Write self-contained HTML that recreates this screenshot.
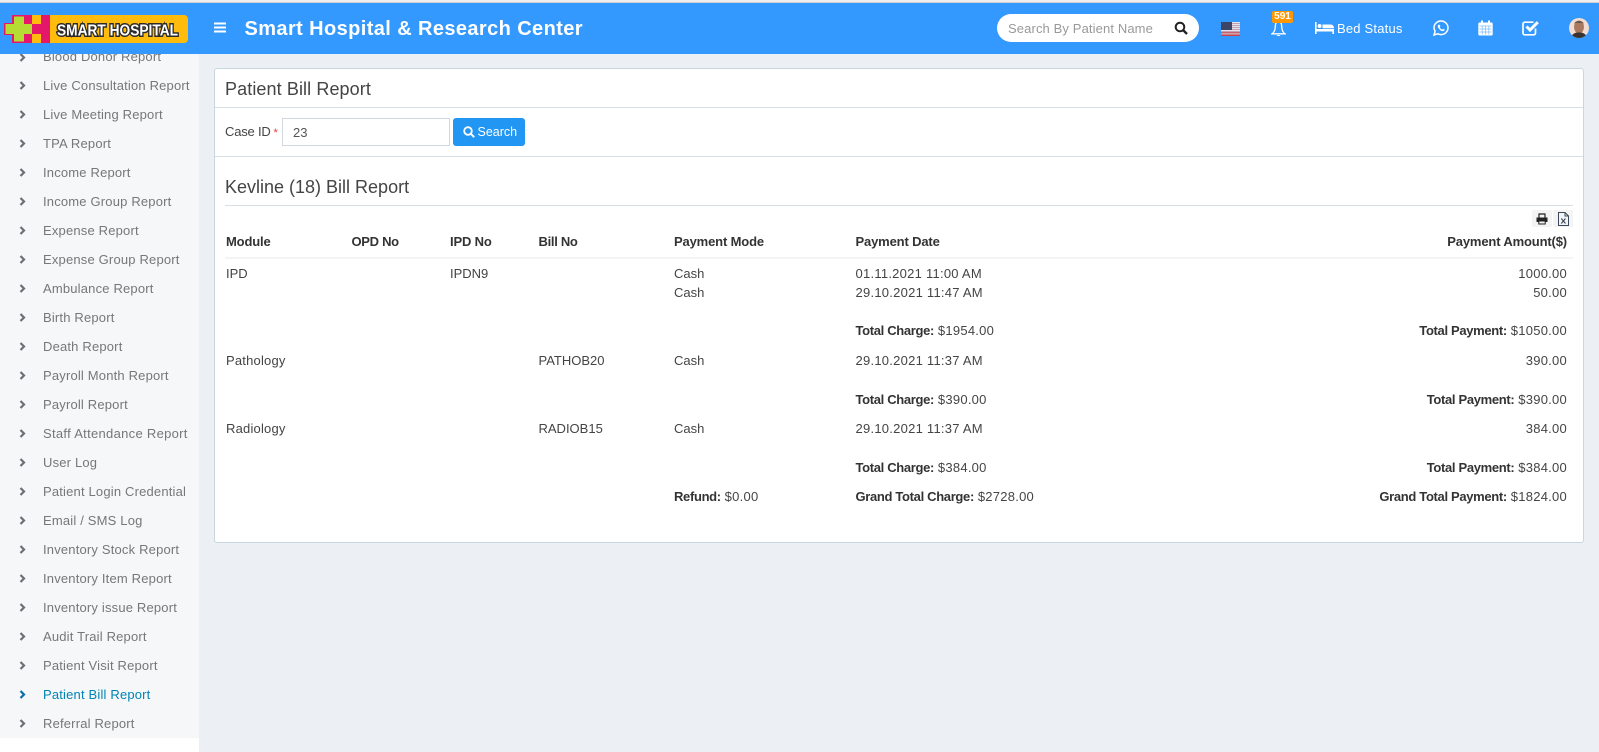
<!DOCTYPE html>
<html><head><meta charset="utf-8"><title>Patient Bill Report</title>
<style>
html,body{margin:0;padding:0;width:1599px;height:752px;overflow:hidden;background:#fff;font-family:"Liberation Sans",sans-serif;font-size:13px;color:#444}
div,span,svg{box-sizing:border-box}
.a{position:absolute}
.t{position:absolute;white-space:nowrap;line-height:16px;height:16px}
.r{text-align:right;right:32px}
.v{letter-spacing:.25px}
b{color:#333;font-weight:bold;letter-spacing:-.33px}
.s{left:43px;color:#777;letter-spacing:.18px}
.c{position:absolute;left:19px;width:7px;height:9px}
.h{font-weight:bold;color:#333;letter-spacing:-.15px}
</style></head><body>
<div class="a" style="left:199px;top:0;width:1400px;height:752px;background:#ecf0f5"></div>
<div class="a" style="left:0;top:0;width:199px;height:738px;background:#f6f7f9"></div>

<svg width="0" height="0" style="position:absolute"><defs><symbol id="ch" viewBox="0 0 7 9"><path d="M1.5 1L5 4.5L1.5 8" fill="none" stroke="currentColor" stroke-width="2.2"/></symbol></defs></svg>
<div style="color:#6e6e74">
<svg class="c" style="top:52.5px"><use href="#ch"/></svg><div class="t s" style="top:49px">Blood Donor Report</div>
<svg class="c" style="top:81px"><use href="#ch"/></svg><div class="t s" style="top:77.5px">Live Consultation Report</div>
<svg class="c" style="top:110px"><use href="#ch"/></svg><div class="t s" style="top:106.5px">Live Meeting Report</div>
<svg class="c" style="top:139px"><use href="#ch"/></svg><div class="t s" style="top:135.5px">TPA Report</div>
<svg class="c" style="top:168px"><use href="#ch"/></svg><div class="t s" style="top:164.5px">Income Report</div>
<svg class="c" style="top:197px"><use href="#ch"/></svg><div class="t s" style="top:193.5px">Income Group Report</div>
<svg class="c" style="top:226px"><use href="#ch"/></svg><div class="t s" style="top:222.5px">Expense Report</div>
<svg class="c" style="top:255px"><use href="#ch"/></svg><div class="t s" style="top:251.5px">Expense Group Report</div>
<svg class="c" style="top:284px"><use href="#ch"/></svg><div class="t s" style="top:280.5px">Ambulance Report</div>
<svg class="c" style="top:313px"><use href="#ch"/></svg><div class="t s" style="top:309.5px">Birth Report</div>
<svg class="c" style="top:342px"><use href="#ch"/></svg><div class="t s" style="top:338.5px">Death Report</div>
<svg class="c" style="top:371px"><use href="#ch"/></svg><div class="t s" style="top:367.5px">Payroll Month Report</div>
<svg class="c" style="top:400px"><use href="#ch"/></svg><div class="t s" style="top:396.5px">Payroll Report</div>
<svg class="c" style="top:429px"><use href="#ch"/></svg><div class="t s" style="top:425.5px;letter-spacing:.3px">Staff Attendance Report</div>
<svg class="c" style="top:458px"><use href="#ch"/></svg><div class="t s" style="top:454.5px">User Log</div>
<svg class="c" style="top:487px"><use href="#ch"/></svg><div class="t s" style="top:483.5px">Patient Login Credential</div>
<svg class="c" style="top:516px"><use href="#ch"/></svg><div class="t s" style="top:512.5px">Email / SMS Log</div>
<svg class="c" style="top:545px"><use href="#ch"/></svg><div class="t s" style="top:541.5px">Inventory Stock Report</div>
<svg class="c" style="top:574px"><use href="#ch"/></svg><div class="t s" style="top:570.5px">Inventory Item Report</div>
<svg class="c" style="top:603px"><use href="#ch"/></svg><div class="t s" style="top:599.5px">Inventory issue Report</div>
<svg class="c" style="top:632px"><use href="#ch"/></svg><div class="t s" style="top:628.5px">Audit Trail Report</div>
<svg class="c" style="top:661px"><use href="#ch"/></svg><div class="t s" style="top:657.5px">Patient Visit Report</div>
<svg class="c" style="top:690px;color:#0a6fa8"><use href="#ch"/></svg><div class="t s" style="top:686.5px;color:#0084b4">Patient Bill Report</div>
<svg class="c" style="top:719px"><use href="#ch"/></svg><div class="t s" style="top:715.5px">Referral Report</div>
</div>

<!-- header -->
<div class="a" style="left:0;top:0;width:1599px;height:3px;background:#eee;border-bottom:1px solid #d0d0d0"></div>
<div class="a" style="left:0;top:3px;width:1599px;height:51px;background:#3399ff"></div>

<!-- logo -->
<svg class="a" style="left:0;top:0" width="200" height="54">
<path d="M50 15H184a4 4 0 0 1 4 4V39a4 4 0 0 1-4 4H50Z" fill="#ffbc0d"/>
<path d="M12 15H50V43H12V35H4V23H12Z" fill="#e5176b"/>
<path d="M14 16.5H24V24H32V34H24V41.5H14V34H5.5V24H14Z" fill="#b5dc32"/>
<rect x="32" y="15" width="9" height="9" fill="#ffbc0d"/><rect x="32" y="34" width="9" height="9" fill="#ffbc0d"/>
<text x="57" y="35.5" font-family="Liberation Sans" font-weight="bold" font-size="16" fill="#fff" stroke="#2a2a2a" stroke-width="3" paint-order="stroke" textLength="121" lengthAdjust="spacingAndGlyphs">SMART HOSPITAL</text>
</svg>

<!-- hamburger -->
<svg class="a" style="left:214px;top:22px" width="12" height="11"><path d="M0 1.5H12M0 5.5H12M0 9.5H12" stroke="#fff" stroke-width="2"/></svg>
<div class="t" style="left:244.5px;top:16.5px;height:24px;line-height:24px;font-size:20px;font-weight:bold;color:#fff;letter-spacing:.4px">Smart Hospital &amp; Research Center</div>

<!-- search -->
<div class="a" style="left:997px;top:14px;width:202px;height:28px;background:#fff;border-radius:14px"></div>
<div class="t" style="left:1008px;top:21px;color:#999;letter-spacing:.12px">Search By Patient Name</div>
<svg class="a" style="left:1174px;top:21px" width="14" height="14" viewBox="0 0 14 14"><circle cx="6" cy="6" r="4.3" fill="none" stroke="#222" stroke-width="2"/><path d="M9 9L13 13" stroke="#222" stroke-width="2.4"/></svg>

<!-- flag -->
<svg class="a" style="left:1221px;top:22px" width="19" height="14" viewBox="0 0 19 14">
<rect width="19" height="14" fill="#e4e4ee"/>
<path d="M0 1.5H19M0 3.5H19M0 5.5H19M0 7.5H19M0 9.5H19M0 11.5H19" stroke="#c4a0b0" stroke-width="1"/>
<path d="M0 13.2H19" stroke="#c9404a" stroke-width="1.6"/>
<path d="M0 10.5H19" stroke="#c9606a" stroke-width="1"/>
<rect width="11" height="8" fill="#3c4468"/>
</svg>

<!-- bell -->
<svg class="a" style="left:1271px;top:20px" width="15" height="17" viewBox="0 0 15 17"><path d="M7.5 1.5C4.8 1.5 4.4 4 4.2 7.5C4 11 3 12.5 1 13.8H14C12 12.5 11 11 10.8 7.5C10.6 4 10.2 1.5 7.5 1.5Z" fill="none" stroke="#fff" stroke-width="1.3"/><path d="M5.6 15C6 16.4 9 16.4 9.4 15Z" fill="#fff"/></svg>
<div class="a" style="left:1272px;top:11px;width:21px;height:11.5px;background:#ff9800;border-radius:2px;color:#fff;font-size:10px;font-weight:bold;line-height:12px;text-align:center">591</div>

<!-- bed -->
<svg class="a" style="left:1315px;top:21px" width="19" height="13" viewBox="0 0 19 13"><path d="M0 1H1.6V8H19V13H17.4V10.5H1.6V13H0Z" fill="#fff"/><circle cx="4.6" cy="5" r="2" fill="#fff"/><path d="M7.5 3.5H15.5C17.5 3.5 19 5 19 7.2H7.5Z" fill="#fff"/></svg>
<div class="t" style="left:1337px;top:21px;color:#fff;letter-spacing:.2px">Bed Status</div>

<!-- whatsapp -->
<svg class="a" style="left:1433px;top:20px" width="16" height="16" viewBox="0 0 16 16"><path d="M1 15L2.1 11.2C1.4 10.1 1 9 1 7.8C1 4.1 4.1 1 8 1C11.9 1 15 4.1 15 7.8C15 11.6 11.9 14.6 8 14.6C6.8 14.6 5.7 14.3 4.7 13.8Z" fill="none" stroke="#fff" stroke-width="1.5"/><path d="M5.4 4.7C4.5 5.5 4.6 7 5.8 8.6C7.1 10.4 9 11.4 10.4 11C11.3 10.8 11.8 10 11.6 9.6L10 8.7L9.2 9.6C8.2 9.3 7.1 8.2 6.7 7.2L7.4 6.3L6.6 4.7Z" fill="#fff"/></svg>

<!-- calendar -->
<svg class="a" style="left:1478px;top:20px" width="15" height="16" viewBox="0 0 15 16"><path d="M1.5 2.5H13.5A1.2 1.2 0 0 1 14.7 3.7V14.3A1.2 1.2 0 0 1 13.5 15.5H1.5A1.2 1.2 0 0 1 .3 14.3V3.7A1.2 1.2 0 0 1 1.5 2.5Z" fill="#fff"/><path d="M4 0.5V3.5M11 0.5V3.5" stroke="#fff" stroke-width="2"/><path d="M1.5 6H13.5M1.5 9H13.5M1.5 12H13.5M4.2 6V14.5M7.5 6V14.5M10.8 6V14.5" stroke="#7fbdff" stroke-width=".7"/></svg>

<!-- check -->
<svg class="a" style="left:1522px;top:20px" width="18" height="16" viewBox="0 0 18 16"><path d="M13.5 8.5V13A1.8 1.8 0 0 1 11.7 14.8H2.8A1.8 1.8 0 0 1 1 13V4A1.8 1.8 0 0 1 2.8 2.2H11.5" fill="none" stroke="#fff" stroke-width="1.7"/><path d="M4.5 6.5L8 10L15.8 2.2" fill="none" stroke="#fff" stroke-width="3"/></svg>

<!-- avatar -->
<svg class="a" style="left:1569px;top:18px" width="20" height="20" viewBox="0 0 20 20"><defs><clipPath id="av"><circle cx="10" cy="10" r="10"/></clipPath></defs><g clip-path="url(#av)"><rect width="20" height="20" fill="#f3ddd2"/><ellipse cx="10" cy="9" rx="5" ry="6.5" fill="#a9795f"/><path d="M5 6C6 2 14 2 15 6L14 5H6Z" fill="#67584d"/><path d="M2 20C3 15 7 14.5 10 14.5C13 14.5 17 15 18 20Z" fill="#3a3330"/></g></svg>

<!-- box -->
<div class="a" style="left:214px;top:68px;width:1370px;height:475px;background:#fff;border:1px solid #c8d6e0;border-radius:3px"></div>
<div class="a" style="left:215px;top:107px;width:1368px;height:1px;background:#d8e0e5"></div>
<div class="a" style="left:215px;top:156px;width:1368px;height:1px;background:#d8e0e5"></div>

<div class="t" style="left:225px;top:77px;height:24px;line-height:24px;font-size:18px;color:#444;letter-spacing:.1px">Patient Bill Report</div>

<div class="t" style="left:225px;top:124px;color:#444;letter-spacing:-.2px">Case ID</div>
<div class="t" style="left:273.5px;top:125px;color:#e53935;font-size:11px">*</div>
<div class="a" style="left:282px;top:118px;width:168px;height:28px;background:#fff;border:1px solid #d2d6de"></div>
<div class="t" style="left:293px;top:125px;color:#555">23</div>
<div class="a" style="left:453px;top:118px;width:72px;height:28px;background:#2196f3;border-radius:3px"></div>
<svg class="a" style="left:463px;top:126px" width="12" height="12" viewBox="0 0 12 12"><circle cx="5" cy="5" r="3.8" fill="none" stroke="#fff" stroke-width="1.8"/><path d="M7.8 7.8L11.2 11.2" stroke="#fff" stroke-width="2"/></svg>
<div class="t" style="left:477.5px;top:124px;color:#fff;font-size:12.5px">Search</div>

<div class="t" style="left:225px;top:175px;height:24px;line-height:24px;font-size:18px;color:#444">Kevline (18) Bill Report</div>
<div class="a" style="left:225px;top:205px;width:1348px;height:1px;background:#d8e0e5"></div>

<!-- export buttons -->
<div class="a" style="left:1532px;top:210px;width:20px;height:17px;background:#f4f4f4;border-radius:2px"></div>
<div class="a" style="left:1553px;top:210px;width:20px;height:17px;background:#f4f4f4;border-radius:2px"></div>
<svg class="a" style="left:1536px;top:213px" width="12" height="12" viewBox="0 0 12 12"><path d="M3 4.5V1H9V4.5" fill="none" stroke="#222" stroke-width="1.2"/><path d="M0.5 4.5H11.5V9H9.5V7.5H2.5V9H0.5Z" fill="#222"/><path d="M2.8 8H9.2V11H2.8Z" fill="none" stroke="#222" stroke-width="1"/></svg>
<svg class="a" style="left:1558px;top:212px" width="11" height="14" viewBox="0 0 11 14"><path d="M.5 .5H7L10.5 4V13.5H.5Z" fill="none" stroke="#3a4a5a" stroke-width="1"/><path d="M7 .5V4H10.5" fill="none" stroke="#3a4a5a" stroke-width="1"/><path d="M3.3 6.5L7.5 11.5M7.5 6.5L3.3 11.5" stroke="#3a4a5a" stroke-width="1.1"/></svg>

<!-- table header -->
<div class="t h" style="left:226px;top:234px">Module</div>
<div class="t h" style="left:351.5px;top:234px;letter-spacing:-.3px">OPD No</div>
<div class="t h" style="left:450px;top:234px">IPD No</div>
<div class="t h" style="left:538.5px;top:234px;letter-spacing:-.3px">Bill No</div>
<div class="t h" style="left:674px;top:234px">Payment Mode</div>
<div class="t h" style="left:855.5px;top:234px">Payment Date</div>
<div class="t h r" style="top:234px">Payment Amount($)</div>
<div class="a" style="left:225px;top:257px;width:1348px;height:2px;background:#f4f4f4"></div>

<!-- rows -->
<div class="t" style="left:226px;top:266px">IPD</div>
<div class="t" style="left:450px;top:266px">IPDN9</div>
<div class="t" style="left:674px;top:266px">Cash</div>
<div class="t v" style="left:855.5px;top:266px">01.11.2021 11:00 AM</div>
<div class="t r v" style="top:266px">1000.00</div>
<div class="t" style="left:674px;top:285px">Cash</div>
<div class="t v" style="left:855.5px;top:285px">29.10.2021 11:47 AM</div>
<div class="t r v" style="top:285px">50.00</div>
<div class="t v" style="left:855.5px;top:323px"><b>Total Charge:</b> $1954.00</div>
<div class="t r v" style="top:323px"><b>Total Payment:</b> $1050.00</div>

<div class="t" style="left:226px;top:353px;letter-spacing:.2px">Pathology</div>
<div class="t" style="left:538.5px;top:353px">PATHOB20</div>
<div class="t" style="left:674px;top:353px">Cash</div>
<div class="t v" style="left:855.5px;top:353px">29.10.2021 11:37 AM</div>
<div class="t r v" style="top:353px">390.00</div>
<div class="t v" style="left:855.5px;top:391.5px"><b>Total Charge:</b> $390.00</div>
<div class="t r v" style="top:391.5px"><b>Total Payment:</b> $390.00</div>

<div class="t" style="left:226px;top:421px;letter-spacing:.2px">Radiology</div>
<div class="t" style="left:538.5px;top:421px">RADIOB15</div>
<div class="t" style="left:674px;top:421px">Cash</div>
<div class="t v" style="left:855.5px;top:421px">29.10.2021 11:37 AM</div>
<div class="t r v" style="top:421px">384.00</div>
<div class="t v" style="left:855.5px;top:460px"><b>Total Charge:</b> $384.00</div>
<div class="t r v" style="top:460px"><b>Total Payment:</b> $384.00</div>

<div class="t v" style="left:674px;top:488.5px"><b>Refund:</b> $0.00</div>
<div class="t v" style="left:855.5px;top:488.5px"><b>Grand Total Charge:</b> $2728.00</div>
<div class="t r v" style="top:488.5px"><b>Grand Total Payment:</b> $1824.00</div>
</body></html>
